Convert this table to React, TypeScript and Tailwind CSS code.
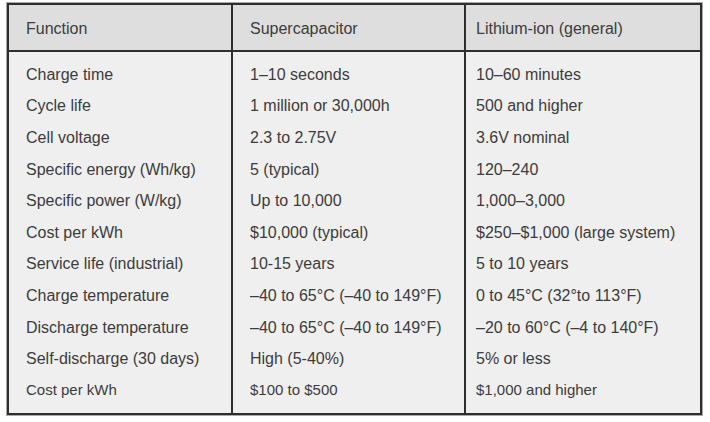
const header = ['Function', 'Supercapacitor', 'Lithium-ion (general)']

const rows: [string, string, string][] = [
  ['Charge time', '1–10 seconds', '10–60 minutes'],
  ['Cycle life', '1 million or 30,000h', '500 and higher'],
  ['Cell voltage', '2.3 to 2.75V', '3.6V nominal'],
  ['Specific energy (Wh/kg)', '5 (typical)', '120–240'],
  ['Specific power (W/kg)', 'Up to 10,000', '1,000–3,000'],
  ['Cost per kWh', '$10,000 (typical)', '$250–$1,000 (large system)'],
  ['Service life (industrial)', '10-15 years', '5 to 10 years'],
  ['Charge temperature', '–40 to 65°C (–40 to 149°F)', '0 to 45°C (32°to 113°F)'],
  ['Discharge temperature', '–40 to 65°C (–40 to 149°F)', '–20 to 60°C (–4 to 140°F)'],
  ['Self-discharge (30 days)', 'High (5-40%)', '5% or less'],
  ['Cost per kWh', '$100 to $500', '$1,000 and higher'],
]

// column paddings differ a bit in the source table
const pads = ['pl-[17px]', 'pl-[17px]', 'pl-[10px]']
const borders = ['border-r-2 border-[#2e2e2e]', 'border-r-2 border-[#2e2e2e]', '']

export default function App() {
  return (
    <div className="h-[422px] w-[710px] bg-white pl-[7px] pt-[3px] font-['Liberation_Sans',Arial,sans-serif] text-[#3c3c3c]">
      <div className="flex h-[412px] w-[695px] flex-col border-2 border-[#2e2e2e] shadow-[0_0_0_1px_#a8a8a8]">
        {/* header */}
        <div className="grid h-[47px] grid-cols-[224px_233px_1fr] border-b-2 border-[#2e2e2e] bg-[#dedede]">
          {header.map((h, i) => (
            <div
              key={h}
              className={`flex items-center pt-[3px] text-[16px] ${pads[i]} ${borders[i]}`}
            >
              {h}
            </div>
          ))}
        </div>
        {/* body */}
        <div className="grid grow grid-cols-[224px_233px_1fr] bg-[#efefef]">
          {[0, 1, 2].map((c) => (
            <div key={c} className={`flex flex-col pt-[7px] ${pads[c]} ${borders[c]}`}>
              {rows.map((r, i) => (
                <div
                  key={i}
                  className={`flex h-[31.6px] items-center ${i === rows.length - 1 ? 'text-[15px]' : 'text-[16px]'}`}
                >
                  {r[c]}
                </div>
              ))}
            </div>
          ))}
        </div>
      </div>
    </div>
  )
}
